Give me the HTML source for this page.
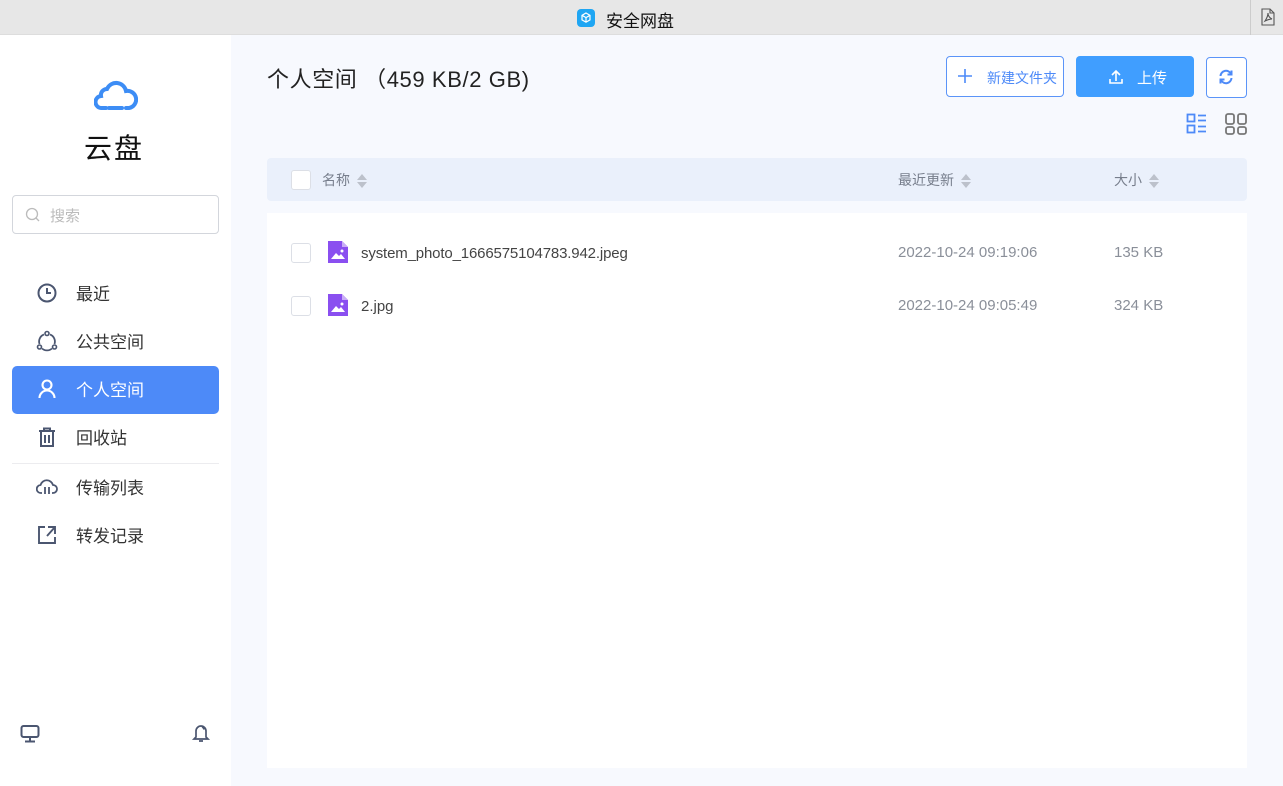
<!DOCTYPE html>
<html><head><meta charset="utf-8"><style>
*{margin:0;padding:0;box-sizing:border-box}
body{width:1283px;height:786px;overflow:hidden;font-family:"Liberation Sans","Noto Sans CJK SC",sans-serif;background:#f7f9fe;position:relative;color:#333}
.abs{position:absolute}
.title{left:0;top:0;width:1283px;height:35px;background:#e7e7e7;border-bottom:1px solid #ddd}
.side{left:0;top:35px;width:231px;height:751px;background:#fff}
.nav{left:12px;width:207px;height:48px;display:flex;align-items:center;font-size:17px;color:#333;padding-bottom:3px}
.nav svg{margin-left:24px;margin-right:18px}
.cb{width:20px;height:20px;border:1px solid #dcdfe6;border-radius:3px;background:#fff}
.th{font-size:14px;color:#777e8c}
.arr{display:inline-block;vertical-align:middle;margin-left:6px}
.td{font-size:15px;color:#8a8f99}
</style></head><body>
<div class="abs title"></div>
<div class="abs" style="left:577px;top:9px;width:18px;height:18px;border-radius:4px;background:#1fa6f3"><svg width="18" height="18" viewBox="0 0 18 18"><path d="M9 4l4 2.3v4.6L9 13.2 5 10.9V6.3z M5 6.3L9 8.6l4-2.3 M9 8.6v4.6" fill="none" stroke="#fff" stroke-width="1.2"/></svg></div>
<div class="abs" style="left:606px;top:7px;font-size:17px;color:#111">安全网盘</div>
<div class="abs" style="left:1250px;top:0;width:33px;height:35px;border-left:1px solid #ccc"><svg class="abs" style="left:9px;top:8px" width="16" height="18" viewBox="0 0 16 18"><path d="M2 1h8l4 4v12H2z M10 1v4h4 M5 13c2-3 3-6 3-8 0 3 2 5 4 6-3 0-5 1-7 2z" fill="none" stroke="#555" stroke-width="1.1"/></svg></div>

<div class="abs side"></div>
<svg class="abs" style="left:94px;top:79px" width="44" height="32" viewBox="0 0 44 32"><path d="M12 29H8a6 6 0 0 1-1-12 6 6 0 0 1 6-7 10 10 0 0 1 19 2 8 8 0 0 1 3 17h-3 M15 29h13" fill="none" stroke="#3d8df5" stroke-width="4" stroke-linecap="round"/></svg>
<div class="abs" style="left:84px;top:127px;font-size:28px;color:#111;letter-spacing:2px">云盘</div>
<div class="abs" style="left:12px;top:195px;width:207px;height:39px;border:1px solid #d3d6dc;border-radius:4px"></div>
<svg class="abs" style="left:25px;top:207px" width="16" height="16" viewBox="0 0 16 16"><circle cx="7" cy="7" r="5.5" fill="none" stroke="#bbb" stroke-width="1.3"/><path d="M11 11l3 3" stroke="#bbb" stroke-width="1.3"/></svg>
<div class="abs" style="left:50px;top:205px;font-size:15px;color:#bbb">搜索</div>

<div class="abs nav" style="top:270px"><svg width="22" height="22" viewBox="0 0 22 22"><circle cx="11" cy="11" r="8.5" fill="none" stroke="#4b5670" stroke-width="2"/><path d="M11 6v5h4" fill="none" stroke="#4b5670" stroke-width="2"/></svg>最近</div>
<div class="abs nav" style="top:318px"><svg width="22" height="22" viewBox="0 0 22 22"><path d="M8 4.5A7.5 7.5 0 0 0 3.5 14 M14 4.5A7.5 7.5 0 0 1 18.5 14 M6 18.5a7.5 7.5 0 0 0 10 0" fill="none" stroke="#4b5670" stroke-width="1.8"/><circle cx="11" cy="3.5" r="2" fill="none" stroke="#4b5670" stroke-width="1.6"/><circle cx="3.5" cy="17" r="2" fill="none" stroke="#4b5670" stroke-width="1.6"/><circle cx="18.5" cy="17" r="2" fill="none" stroke="#4b5670" stroke-width="1.6"/></svg>公共空间</div>
<div class="abs nav" style="top:366px;background:#4d8af8;border-radius:5px;color:#fff"><svg width="22" height="22" viewBox="0 0 22 22"><circle cx="11" cy="7" r="4.5" fill="none" stroke="#fff" stroke-width="2.1"/><path d="M3.5 20a7.5 7.5 0 0 1 15 0" fill="none" stroke="#fff" stroke-width="2.1"/></svg>个人空间</div>
<div class="abs nav" style="top:414px"><svg width="22" height="22" viewBox="0 0 22 22"><path d="M3 5h16 M8 5V2.5h6V5 M5 5v15h12V5 M9 9v8 M13 9v8 M4 20h14" fill="none" stroke="#4b5670" stroke-width="2"/></svg>回收站</div>
<div class="abs" style="left:12px;top:463px;width:207px;height:1px;background:#ececef"></div>
<div class="abs nav" style="top:464px"><svg width="22" height="22" viewBox="0 0 22 22"><path d="M6 17H5a4 4 0 0 1-.5-8 6.5 6.5 0 0 1 12.5 0 4 4 0 0 1 0 8h-1 M9 11v7 M13 11v7" fill="none" stroke="#4b5670" stroke-width="1.8"/></svg>传输列表</div>
<div class="abs nav" style="top:512px"><svg width="22" height="22" viewBox="0 0 22 22"><path d="M9 3H3v16h16v-6 M12 3h7v7 M19 3l-8 9" fill="none" stroke="#4b5670" stroke-width="1.9"/></svg>转发记录</div>
<svg class="abs" style="left:20px;top:724px" width="20" height="20" viewBox="0 0 20 20"><rect x="1.5" y="2" width="17" height="11" rx="2" fill="none" stroke="#4b5670" stroke-width="2"/><path d="M10 13v4 M5 17.5h10" stroke="#4b5670" stroke-width="2"/></svg>
<svg class="abs" style="left:190px;top:722px" width="22" height="22" viewBox="0 0 22 22"><path d="M4 17h14l-2-2V9a5 5 0 0 0-10 0v6z M9 19h4 M12 5a3 3 0 0 1 2 2.5" fill="none" stroke="#4b5670" stroke-width="1.7"/></svg>

<div class="abs" style="left:267px;top:62px;font-size:22px;color:#222;letter-spacing:0.6px">个人空间 （459 KB/2 GB)</div>
<div class="abs" style="left:946px;top:56px;width:118px;height:41px;border:1px solid #5b94f8;border-radius:4px;background:#fff"></div>
<svg class="abs" style="left:957px;top:68px" width="16" height="16" viewBox="0 0 16 16"><path d="M8 1v14 M1 8h14" stroke="#4d8af8" stroke-width="1.6"/></svg>
<div class="abs" style="left:987px;top:68px;font-size:14px;color:#4d8af8">新建文件夹</div>
<div class="abs" style="left:1076px;top:56px;width:118px;height:41px;background:#409eff;border-radius:4px"></div>
<svg class="abs" style="left:1108px;top:69px" width="16" height="16" viewBox="0 0 16 16"><path d="M8 12V2 M4 6l4-4 4 4 M2 10v4h12v-4" fill="none" stroke="#fff" stroke-width="1.6"/></svg>
<div class="abs" style="left:1137px;top:67px;font-size:15px;color:#fff">上传</div>
<div class="abs" style="left:1206px;top:57px;width:41px;height:41px;border:1px solid #5b94f8;border-radius:4px;background:#fff"></div>
<svg class="abs" style="left:1217px;top:68px" width="18" height="18" viewBox="0 0 18 18"><path d="M3.5 8A5.5 5.5 0 0 1 14 6 M14.5 10A5.5 5.5 0 0 1 4 12 M14.5 2.5V6.5H10.5 M3.5 15.5V11.5H7.5" fill="none" stroke="#4d8af8" stroke-width="2"/></svg>
<svg class="abs" style="left:1186px;top:113px" width="22" height="22" viewBox="0 0 22 22"><rect x="1.5" y="1.5" width="7" height="7" fill="none" stroke="#4d8af8" stroke-width="1.8"/><rect x="1.5" y="12.5" width="7" height="7" fill="none" stroke="#4d8af8" stroke-width="1.8"/><path d="M12 2.5h8 M12 7.5h8 M12 13.5h8 M12 18.5h8" stroke="#4d8af8" stroke-width="1.8"/></svg>
<svg class="abs" style="left:1225px;top:113px" width="22" height="22" viewBox="0 0 22 22"><rect x="1" y="1" width="8" height="10" rx="2" fill="none" stroke="#777" stroke-width="1.8"/><rect x="13" y="1" width="8" height="10" rx="2" fill="none" stroke="#777" stroke-width="1.8"/><rect x="1" y="14" width="8" height="7" rx="2" fill="none" stroke="#777" stroke-width="1.8"/><rect x="13" y="14" width="8" height="7" rx="2" fill="none" stroke="#777" stroke-width="1.8"/></svg>

<div class="abs" style="left:267px;top:158px;width:980px;height:43px;background:#eaf0fb;border-radius:4px"></div>
<div class="abs cb" style="left:291px;top:170px"></div>
<div class="abs th" style="left:322px;top:170px">名称<svg class="arr" width="12" height="16" viewBox="0 0 12 16"><path d="M1 7l5-6 5 6z M1 9l5 6 5-6z" fill="#bcc1cb"/></svg></div>
<div class="abs th" style="left:898px;top:170px">最近更新<svg class="arr" width="12" height="16" viewBox="0 0 12 16"><path d="M1 7l5-6 5 6z M1 9l5 6 5-6z" fill="#bcc1cb"/></svg></div>
<div class="abs th" style="left:1114px;top:170px">大小<svg class="arr" width="12" height="16" viewBox="0 0 12 16"><path d="M1 7l5-6 5 6z M1 9l5 6 5-6z" fill="#bcc1cb"/></svg></div>

<div class="abs" style="left:267px;top:213px;width:980px;height:555px;background:#fff"></div>
<div class="abs cb" style="left:291px;top:243px"></div>
<svg class="abs" style="left:328px;top:241px" width="20" height="22" viewBox="0 0 20 22"><path d="M0 0h14l6 6v16H0z" fill="#8a4ff0"/><path d="M14 0v6h6z" fill="#c9adf7"/><path d="M3 18l5-6 3 3 2-2 4 5z" fill="#fff"/><circle cx="14" cy="10" r="1.5" fill="#fff"/></svg>
<div class="abs" style="left:361px;top:245px;font-size:15px;color:#444;letter-spacing:-0.15px">system_photo_1666575104783.942.jpeg</div>
<div class="abs td" style="left:898px;top:244px">2022-10-24 09:19:06</div>
<div class="abs td" style="left:1114px;top:244px">135 KB</div>
<div class="abs cb" style="left:291px;top:296px"></div>
<svg class="abs" style="left:328px;top:294px" width="20" height="22" viewBox="0 0 20 22"><path d="M0 0h14l6 6v16H0z" fill="#8a4ff0"/><path d="M14 0v6h6z" fill="#c9adf7"/><path d="M3 18l5-6 3 3 2-2 4 5z" fill="#fff"/><circle cx="14" cy="10" r="1.5" fill="#fff"/></svg>
<div class="abs" style="left:361px;top:298px;font-size:15px;color:#444">2.jpg</div>
<div class="abs td" style="left:898px;top:297px">2022-10-24 09:05:49</div>
<div class="abs td" style="left:1114px;top:297px">324 KB</div>
</body></html>
